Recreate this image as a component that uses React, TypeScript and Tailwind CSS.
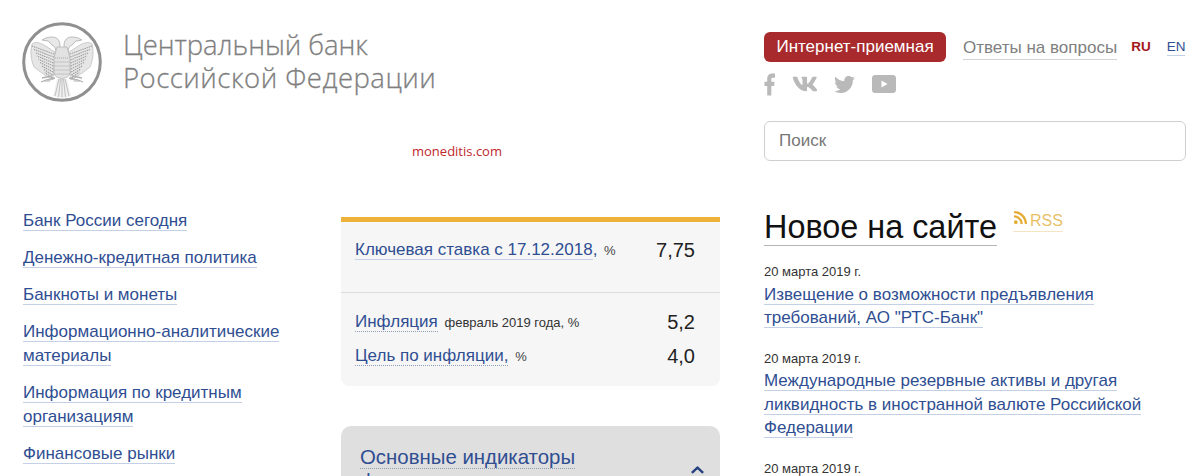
import React from "react";
import { FaVk, FaTwitter, FaRss } from "react-icons/fa";

function Eagle() {
  const rows = [0, 1, 2, 3, 4, 5, 6, 7, 8];
  const claws = [0, 1, 2, 3, 4, 5];
  return (
    <svg viewBox="0 0 80 80" className="w-[80px] h-[80px] shrink-0">
      <circle cx="40" cy="40" r="38.3" fill="#fff" stroke="#909090" strokeWidth="3" />
      {[false, true].map((flip) => (
        <g key={String(flip)} transform={flip ? "translate(80 0) scale(-1 1)" : undefined}>
          <path d="M47 30 C52 27 56 24 60 22 C64 20 68 20 70 22 C72 30 71 38 68 45 C62 50 56 54 49 58 Z" fill="#e6e6e6" stroke="#b0b0b0" strokeWidth="0.6" />
          {rows.map((i) => (
            <path key={i} d={`M${48 + i * 0.2} ${32 + i * 3} L${70 - i * 1.6} ${24 + i * 3.3}`} stroke="#9c9c9c" strokeWidth="1.1" strokeDasharray="1.4 0.8" fill="none" />
          ))}
          <path d="M42 24 C42 18 45 15 50 15 C54 15 57 16 60 18 L54 19 C52 20 52 22 50 23 C47 24 46 27 46 31 L41 32 Z" fill="#e8e8e8" stroke="#a4a4a4" strokeWidth="0.7" />
          <path d="M47 56 L56 58 L61 60 M50 54 L60 56" stroke="#b0b0b0" strokeWidth="1.3" fill="none" />
          {claws.map((i) => (
            <path key={i} d={`M${50 + i} ${57} l${3} ${3}`} stroke="#bcbcbc" strokeWidth="0.6" fill="none" />
          ))}
        </g>
      ))}
      <path d="M35 25 H45 L48 36 V52 C45 58 35 58 32 52 V36 Z" fill="#e2e2e2" stroke="#a8a8a8" strokeWidth="0.6" />
      <path d="M33 36 H47 M32.5 40 H47.5 M32.5 44 H47.5 M32.5 48 H47.5 M32.5 52 H47.5" stroke="#a2a2a2" strokeWidth="0.8" strokeDasharray="1.2 0.8" fill="none" />
      <path d="M35 57 H45 L49 74 C44 76 36 76 31 74 Z" fill="#f0f0f0" />
      <path d="M37 57 L33 74 M38.5 57 L36.5 75 M40 57 V75.5 M41.5 57 L43.5 75 M43 57 L47 74" stroke="#b2b2b2" strokeWidth="0.8" fill="none" />
    </svg>
  );
}

function L({ children, dotted = false, className = "" }: { children: React.ReactNode; dotted?: boolean; className?: string }) {
  return (
    <a className={`text-[#2f4e92] border-b ${dotted ? "border-dotted border-[#8f9dbb]" : "border-[#c4d0e6]"} ${className}`}>
      {children}
    </a>
  );
}

function News({ date, children }: { date: string; children?: React.ReactNode }) {
  return (
    <div className="mb-[19px]">
      <div className="text-[13px] leading-[20px] text-[#333] mb-[0.5px]">{date}</div>
      <div className="text-[17px] leading-[23.5px]">{children}</div>
    </div>
  );
}

export default function App() {
  const nav = [
    "Банк России сегодня",
    "Денежно-кредитная политика",
    "Банкноты и монеты",
    "Информационно-аналитические материалы",
    "Информация по кредитным организациям",
    "Финансовые рынки",
  ];
  return (
    <div className="w-[1200px] h-[476px] overflow-hidden bg-white font-['Liberation_Sans',Arial,sans-serif]">
      <header className="flex h-[209px]">
        <div className="w-[764px] pl-[22px] pt-[22px]">
          <div className="flex">
            <Eagle />
            <div className="ml-[21px] mt-[6px] font-['Open_Sans',sans-serif] font-light text-[#7f7f7f] text-[27.5px] leading-[33px] [-webkit-text-stroke:0.3px_#7f7f7f]">
              <div className="tracking-[-0.05px]">Центральный банк</div>
              <div className="tracking-[0.5px]">Российской Федерации</div>
            </div>
          </div>
          <div className="ml-[390px] mt-[40px] font-['Open_Sans',sans-serif] text-[13px] leading-[18px] text-[#c0272d]">moneditis.com</div>
        </div>
        <div className="w-[422px] pt-[32px]">
          <div className="flex items-center whitespace-nowrap">
            <a className="w-[182px] shrink-0 h-[30px] rounded-[6px] bg-[#a82a2c] text-white text-[17px] flex items-center justify-center">Интернет-приемная</a>
            <a className="ml-[17px] shrink-0 text-[17px] leading-[22px] mt-[2px] text-[#808080] border-b border-[#d4d4d4]">Ответы на вопросы</a>
            <span className="ml-[14px] shrink-0 text-[13.5px] font-bold text-[#a3171c]">RU</span>
            <a className="ml-[16px] shrink-0 text-[13.5px] leading-[17px] text-[#2f4e92] border-b border-[#c4d0e6]">EN</a>
          </div>
          <div className="flex items-center mt-[10px] h-[24px] text-[#b9b9b9]">
            <svg viewBox="0 0 12 24" className="w-[11px] h-[23px]" fill="currentColor">
              <path d="M3.5 24 V13.5 H0.5 V9 H3.5 V6 C3.5 2 6 0 9 0 H12 V4.5 H9.5 C8.5 4.5 8 5 8 6 V9 H11.5 L11 13.5 H8 V24 Z" />
            </svg>
            <FaVk className="ml-[17px] w-[26px] h-[24px]" />
            <FaTwitter className="ml-[16px] w-[21px] h-[21px]" />
            <svg viewBox="0 0 24 18" className="ml-[17px] w-[24px] h-[18px]">
              <path fillRule="evenodd" fill="currentColor" d="M3 0 H21 C22.7 0 24 1.3 24 3 V15 C24 16.7 22.7 18 21 18 H3 C1.3 18 0 16.7 0 15 V3 C0 1.3 1.3 0 3 0 Z M9.5 5.5 V12.5 L15.5 9 Z" />
            </svg>
          </div>
          <div className="mt-[25px] h-[40px] rounded-[6px] border border-[#cfcfcf] pl-[14px] flex items-center text-[17px] text-[#777]">Поиск</div>
        </div>
      </header>

      <main className="flex pl-[23px]">
        <nav className="w-[318px] shrink-0 flex flex-col gap-[13px] text-[17px] leading-[24px] pr-[30px]">
          {nav.map((n) => (
            <div key={n}><L>{n}</L></div>
          ))}
        </nav>

        <section className="w-[379px] shrink-0 pt-[8px]">
          <div className="border-t-[5px] border-[#edb23a] bg-[#f6f6f6] rounded-b-[8px] h-[169px] text-[17px]">
            <div className="h-[71px] border-b border-[#dcdcdc] pl-[14px] pr-[25px] pt-[16px] flex justify-between items-start">
              <div className="leading-[24px]"><L>Ключевая ставка с 17.12.2018</L><span className="text-[#2f4e92]">,</span> <span className="text-[13px] text-[#444] ml-[2px]">%</span></div>
              <div className="text-[20px] leading-[24px] text-[#222]">7,75</div>
            </div>
            <div className="pl-[14px] pr-[25px] pt-[17px]">
              <div className="flex justify-between items-center h-[24px]">
                <div><L dotted>Инфляция</L> <span className="text-[13px] text-[#333] ml-[2px]">февраль 2019 года, %</span></div>
                <div className="text-[20px] text-[#222]">5,2</div>
              </div>
              <div className="flex justify-between items-center h-[24px] mt-[10px]">
                <div><L dotted>Цель по инфляции,</L> <span className="text-[13px] text-[#444] ml-[2px]">%</span></div>
                <div className="text-[20px] text-[#222]">4,0</div>
              </div>
            </div>
          </div>
          <div className="mt-[40px] h-[120px] bg-[#e0dfe0] rounded-t-[10px] pl-[19px] pr-[15px] pt-[19px] flex justify-between">
            <div className="text-[20.4px] leading-[24px] text-[#2f4e92]">
              <div><span className="border-b border-dotted border-[#8f9dbb]">Основные индикаторы</span></div>
              <div>финансового рынка</div>
            </div>
            <svg viewBox="0 0 16 10" className="w-[15px] h-[10px] mt-[20px]">
              <path d="M2 8 L8 2.5 L14 8" stroke="#24427f" strokeWidth="2.6" fill="none" />
            </svg>
          </div>
        </section>

        <aside className="ml-[44px] w-[422px] shrink-0 -mt-[1px]">
          <div className="flex items-start">
            <h2 className="text-[32.4px] pt-[2px] leading-[35px] text-[#111] border-b border-[#b5b5b5]">Новое на сайте</h2>
            <a className="ml-[16px] mt-[2px] flex items-center text-[#e8bf66] text-[16px] leading-[20px] border-b border-[#f4e6c4]">
              <FaRss className="w-[15px] h-[15px] text-[#e5ac36] mb-[6px] mr-[2px]" /><span>RSS</span>
            </a>
          </div>
          <div className="mt-[16px]">
            <News date="20 марта 2019 г.">
              <L>Извещение о возможности предъявления</L><br /><L>требований, АО "РТС-Банк"</L>
            </News>
            <News date="20 марта 2019 г.">
              <L>Международные резервные активы и другая</L><br /><L>ликвидность в иностранной валюте Российской</L><br /><L>Федерации</L>
            </News>
            <News date="20 марта 2019 г." />
          </div>
        </aside>
      </main>
    </div>
  );
}
